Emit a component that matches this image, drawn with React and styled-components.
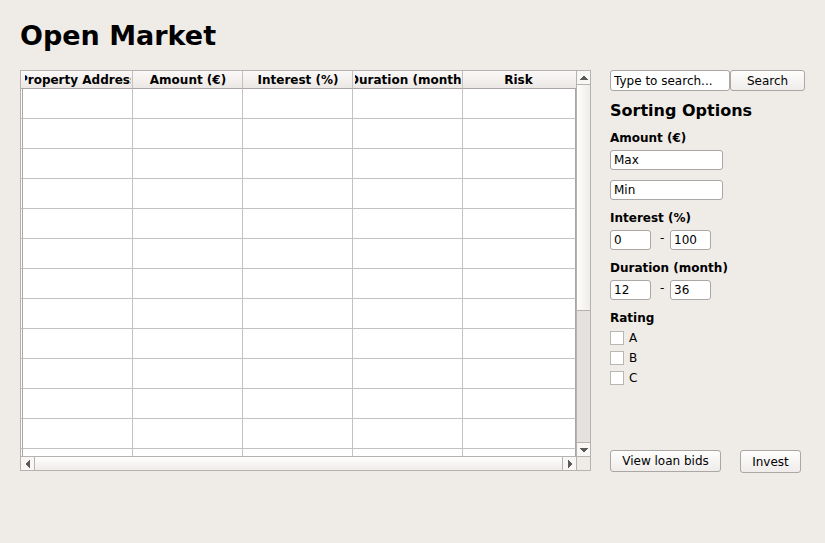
import React from "react";
import styled, { createGlobalStyle } from "styled-components";

const GlobalStyle = createGlobalStyle`
  *, *::before, *::after { box-sizing: border-box; }
  body {
    margin: 0;
    background: #efebe7;
    color: #000;
    font: 12px/20px "DejaVu Sans", Verdana, sans-serif;
  }
`;

const Page = styled.main`
  padding: 16px 20px;
`;

const Title = styled.h1`
  margin: 0 0 14px;
  font-size: 27px;
  line-height: 40px;
  font-weight: 700;
`;

const Columns = styled.div`
  display: grid;
  grid-template-columns: minmax(0, 1fr) 195px;
  column-gap: 19px;
  align-items: start;
`;

const ScrollFrame = styled.section`
  display: grid;
  grid-template-columns: minmax(0, 1fr) 14px;
  grid-template-rows: 385px 14px;
  border: 1px solid #b5b2af;
`;

const Viewport = styled.div`
  overflow: hidden;
  background: #fff;
`;

const Table = styled.table`
  width: 100%;
  table-layout: fixed;
  border-collapse: separate;
  border-spacing: 0;
`;

const GutterCol = styled.col`
  width: 2px;
`;

const DataCol = styled.col`
  width: ${(p) => (p.$last ? "auto" : "110px")};
`;

const HeaderCell = styled.th`
  height: 18px;
  padding: 1px ${(p) => (p.$last ? 4 : 1)}px 0 ${(p) => (p.$first ? 4 : 2)}px;
  background: linear-gradient(#fbf9f8, #ebe7e4);
  border-right: ${(p) => (p.$last ? 0 : 1)}px solid #c4c1be;
  border-bottom: 1px solid #aaa5a2;
  font-weight: 700;
  line-height: 16px;
`;

const HeaderText = styled.div`
  display: flex;
  justify-content: center;
  overflow: hidden;
  white-space: nowrap;
`;

const Cell = styled.td`
  height: 30px;
  padding: 0;
  border-right: 1px solid ${(p) => (p.$edge ? "#aaa5a2" : "#c4c2c0")};
  border-bottom: 1px solid #c4c2c0;
`;

const ScrollBar = styled.div`
  display: flex;
  flex-direction: ${(p) => (p.$vertical ? "column" : "row")};
  background: #e5e1de;
  border: 0 solid #b5b2af;
  border-width: ${(p) => (p.$vertical ? "0 0 0 1px" : "1px 0 0 0")};
`;

const ScrollButton = styled.button`
  display: flex;
  align-items: center;
  justify-content: center;
  flex: none;
  width: 13px;
  height: 13px;
  padding: 0;
  border: 0;
  background: #f9f7f6;
`;

const Thumb = styled.div`
  flex: ${(p) => (p.$vertical ? "0 0 227px" : "1 1 auto")};
  border: 0 solid #b5b2af;
  border-width: ${(p) => (p.$vertical ? "1px 0" : "0 1px")};
  background: linear-gradient(${(p) => (p.$vertical ? "to right" : "to bottom")}, #fefefd, #efecea);
`;

const Track = styled.div`
  flex: 1;
  border-bottom: 1px solid #b5b2af;
`;

const Corner = styled.div`
  background: #efebe7;
  border: 0 solid #b5b2af;
  border-width: 1px 0 0 1px;
`;

const Sidebar = styled.aside`
  display: flex;
  flex-direction: column;
`;

const SearchRow = styled.form`
  display: flex;
`;

const TextBox = styled.input`
  width: ${(p) => p.$width || "100%"};
  min-width: 0;
  height: ${(p) => (p.$tall ? 21 : 20)}px;
  padding: 0 3px;
  border: 1px solid #aaa7a4;
  border-radius: 3px;
  background: #fff;
  color: #000;
  font: inherit;
`;

const Button = styled.button`
  flex: none;
  width: ${(p) => p.$width};
  height: ${(p) => p.$height}px;
  padding: 0;
  border: 1px solid #aaa7a4;
  border-radius: 3px;
  background: linear-gradient(#fefefd, #efecea);
  color: #000;
  font: inherit;
`;

const Heading = styled.h2`
  margin: 10px 0 7px;
  font-size: 16px;
  line-height: 20px;
  font-weight: 700;
`;

const Group = styled.fieldset`
  min-width: 0;
  margin: 0 0 8px;
  padding: 0;
  border: 0;
`;

const Legend = styled.legend`
  padding: 0 0 ${(p) => (p.$tight ? 0 : 2)}px;
  font-weight: 700;
`;

const Stack = styled.div`
  display: flex;
  flex-direction: column;
  gap: 10px;
`;

const Range = styled.div`
  display: flex;
`;

const Dash = styled.span`
  width: 19px;
  padding-left: 9px;
  line-height: 17px;
`;

const Check = styled.label`
  display: flex;
  align-items: center;
  gap: 5px;
  height: 20px;
`;

const CheckBox = styled.input`
  appearance: none;
  width: 14px;
  height: 14px;
  margin: 0;
  border: 1px solid #b9b6b3;
  background: #fff;
  &:checked { background: #5d5b59; box-shadow: inset 0 0 0 2px #fff; }
`;

const Actions = styled.div`
  display: flex;
  gap: 19px;
  margin-top: 54px;
`;

const headers = ["Property Address", "Amount (€)", "Interest (%)", "Duration (month)", "Risk"];
const rows = Array.from({ length: 13 }, (_, i) => i);
const last = headers.length - 1;

const arrows = {
  up: ["M3 0h2v1h1v1h1v1h1v1H0V3h1V2h1V1h1z", 8, 4],
  down: ["M0 0h8v1H7v1H6v1H5v1H3V3H2V2H1V1H0z", 8, 4],
  left: ["M4 0v8H3V7H2V6H1V5H0V3h1V2h1V1h1V0z", 4, 8],
  right: ["M0 0h1v1h1v1h1v1h1v2H3v1H2v1H1v1H0z", 4, 8],
};

function Arrow({ direction }) {
  const [d, width, height] = arrows[direction];
  return (
    <svg width={width} height={height} viewBox={`0 0 ${width} ${height}`} aria-hidden="true">
      <path d={d} fill="#5d5b59" />
    </svg>
  );
}

function RangeFields({ label, from, to }) {
  return (
    <Group>
      <Legend>{label}</Legend>
      <Range>
        <TextBox $width="41px" defaultValue={from} aria-label={`${label} from`} />
        <Dash>-</Dash>
        <TextBox $width="41px" defaultValue={to} aria-label={`${label} to`} />
      </Range>
    </Group>
  );
}

export default function App() {
  return (
    <Page>
      <GlobalStyle />
      <Title>Open Market</Title>
      <Columns>
        <ScrollFrame aria-label="Loans">
          <Viewport>
            <Table>
              <colgroup>
                <GutterCol />
                {headers.map((h, i) => <DataCol key={h} $last={i === last} />)}
              </colgroup>
              <thead>
                <tr>
                  {headers.map((h, i) => (
                    <HeaderCell key={h} colSpan={i === 0 ? 2 : 1} $first={i === 0} $last={i === last}>
                      <HeaderText>{h}</HeaderText>
                    </HeaderCell>
                  ))}
                </tr>
              </thead>
              <tbody>
                {rows.map((r) => (
                  <tr key={r}>
                    <Cell $edge />
                    {headers.map((h, i) => <Cell key={h} $edge={i === last} />)}
                  </tr>
                ))}
              </tbody>
            </Table>
          </Viewport>
          <ScrollBar $vertical>
            <ScrollButton type="button" aria-label="Scroll up"><Arrow direction="up" /></ScrollButton>
            <Thumb $vertical />
            <Track />
            <ScrollButton type="button" aria-label="Scroll down"><Arrow direction="down" /></ScrollButton>
          </ScrollBar>
          <ScrollBar>
            <ScrollButton type="button" aria-label="Scroll left"><Arrow direction="left" /></ScrollButton>
            <Thumb />
            <ScrollButton type="button" aria-label="Scroll right"><Arrow direction="right" /></ScrollButton>
          </ScrollBar>
          <Corner />
        </ScrollFrame>

        <Sidebar>
          <SearchRow onSubmit={(e) => e.preventDefault()}>
            <TextBox $tall defaultValue="Type to search..." aria-label="Search loans" />
            <Button type="submit" $width="75px" $height={21}>Search</Button>
          </SearchRow>
          <Heading>Sorting Options</Heading>
          <Group>
            <Legend>Amount (€)</Legend>
            <Stack>
              <TextBox $width="113px" defaultValue="Max" aria-label="Maximum amount" />
              <TextBox $width="113px" defaultValue="Min" aria-label="Minimum amount" />
            </Stack>
          </Group>
          <RangeFields label="Interest (%)" from="0" to="100" />
          <RangeFields label="Duration (month)" from="12" to="36" />
          <Group>
            <Legend $tight>Rating</Legend>
            {["A", "B", "C"].map((grade) => (
              <Check key={grade}>
                <CheckBox type="checkbox" />
                {grade}
              </Check>
            ))}
          </Group>
          <Actions>
            <Button type="button" $width="111px" $height={22}>View loan bids</Button>
            <Button type="button" $width="61px" $height={23}>Invest</Button>
          </Actions>
        </Sidebar>
      </Columns>
    </Page>
  );
}
